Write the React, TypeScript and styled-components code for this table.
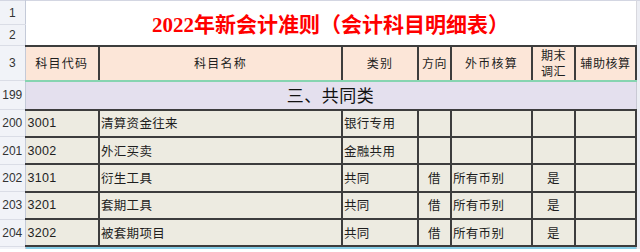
import React from "react";
import styled, {createGlobalStyle} from "styled-components";

const GlobalStyle = createGlobalStyle`
  html, body {
    margin: 0;
    padding: 0;
    background: #ffffff;
  }
  body {
    width: 640px;
    height: 252px;
    overflow: hidden;
  }
`;

const COLS = [25, 74, 243, 76, 33, 81, 43, 61, 4];

type Row = {
  no: number;
  code: string;
  name: string;
  kind: string;
  dir?: string;
  fx?: string;
  adj?: string;
};

const rows: Row[] = [
  {no: 200, code: "3001", name: "清算资金往来", kind: "银行专用"},
  {no: 201, code: "3002", name: "外汇买卖", kind: "金融共用"},
  {no: 202, code: "3101", name: "衍生工具", kind: "共同", dir: "借", fx: "所有币别", adj: "是"},
  {no: 203, code: "3201", name: "套期工具", kind: "共同", dir: "借", fx: "所有币别", adj: "是"},
  {no: 204, code: "3202", name: "被套期项目", kind: "共同", dir: "借", fx: "所有币别", adj: "是"},
];

const App = () => {
  return (
    <>
      <GlobalStyle/>
      <Sheet>
        <colgroup>
          {COLS.map((w, i) => <col key={i} style={{width: w}}/>)}
        </colgroup>
        <tbody>
          <TableRow $h={24}>
            <RowHead>1</RowHead>
            <TitleCell rowSpan={2} colSpan={7}>2022年新会计准则（会计科目明细表）</TitleCell>
            <Gutter rowSpan={2}/>
          </TableRow>
          <TableRow $h={21}>
            <RowHead>2</RowHead>
          </TableRow>
          <TableRow $h={35}>
            <RowHead>3</RowHead>
            <HeadCell $first>科目代码</HeadCell>
            <HeadCell>科目名称</HeadCell>
            <HeadCell>类别</HeadCell>
            <HeadCell $tight>方向</HeadCell>
            <HeadCell>外币核算</HeadCell>
            <HeadCell $tight>
              <HeadLine>期末</HeadLine>
              <HeadLine>调汇</HeadLine>
            </HeadCell>
            <HeadCell $tight>辅助核算</HeadCell>
            <Gutter/>
          </TableRow>
          <TableRow $h={27}>
            <RowHead>199</RowHead>
            <GroupCell colSpan={7}>三、共同类</GroupCell>
            <Gutter/>
          </TableRow>
          {rows.map(r => (
            <TableRow key={r.no} $h={27.4}>
              <RowHead>{r.no}</RowHead>
              <DataCell $first $num>{r.code}</DataCell>
              <DataCell>{r.name}</DataCell>
              <DataCell>{r.kind}</DataCell>
              <DataCell $align="center">{r.dir}</DataCell>
              <DataCell>{r.fx}</DataCell>
              <DataCell $align="center">{r.adj}</DataCell>
              <DataCell/>
              <Gutter/>
            </TableRow>
          ))}
          <BottomRow>
            <BottomHead/>
            <BottomLine colSpan={7}/>
            <Gutter/>
          </BottomRow>
        </tbody>
      </Sheet>
    </>
  );
};

const Sheet = styled.table`
  table-layout: fixed;
  border-collapse: collapse;
  width: 640px;
  border-top: 1px solid #d3d6e2;
  font-family: "Noto Sans CJK SC", sans-serif;
  color: #1e1e1e;
`;

const TableRow = styled.tr<{ $h: number }>`
  height: ${({$h}) => $h}px;
`;

const RowHead = styled.th`
  padding: 0;
  background: #f1f3f8;
  border-right: 1px solid #c4cad8;
  border-bottom: 1px solid #dadde6;
  font-family: "Liberation Sans", "DejaVu Sans", sans-serif;
  font-weight: normal;
  font-size: 12px;
  color: #333;
  text-align: center;
  white-space: nowrap;
  overflow: hidden;
`;

const TitleCell = styled.td`
  padding: 0;
  background: #ffffff;
  border-right: 1px solid #d8d8de;
  border-bottom: 2px solid #3d3d3d;
  text-align: center;
  vertical-align: middle;
  font-family: "Liberation Serif", "Noto Sans CJK SC", serif;
  font-weight: bold;
  font-size: 21px;
  color: #ff0000;
  white-space: nowrap;
`;

const HeadCell = styled.td<{ $first?: boolean; $tight?: boolean }>`
  padding: 0;
  background: #fce6d8;
  border-left: ${({$first}) => ($first ? "none" : "2px solid #3d3d3d")};
  border-right: 2px solid #3d3d3d;
  border-bottom: 2px solid #86d4b0;
  text-align: center;
  vertical-align: middle;
  font-size: 12px;
  line-height: 16px;
  letter-spacing: ${({$tight}) => ($tight ? "0.6px" : "1.3px")};
  white-space: nowrap;
  overflow: hidden;
`;

const HeadLine = styled.div`
  height: 16px;
  line-height: 16px;
`;

const GroupCell = styled.td`
  padding: 0 0 2px;
  background: #e4e0ee;
  border-right: 1px solid #c9c9d4;
  border-bottom: 2px solid #3d3d3d;
  text-align: center;
  vertical-align: middle;
  font-size: 17px;
  letter-spacing: 0.5px;
  color: #111;
`;

const DataCell = styled.td<{ $first?: boolean; $num?: boolean; $align?: string }>`
  padding: 0 ${({$first}) => ($first ? "2px" : "1px")};
  background: #edebe1;
  border-left: ${({$first}) => ($first ? "none" : "2px solid #3d3d3d")};
  border-right: 2px solid #3d3d3d;
  border-bottom: 2px solid #3d3d3d;
  text-align: ${({$align}) => $align || "left"};
  vertical-align: middle;
  font-family: ${({$num}) => ($num ? '"Liberation Sans", "DejaVu Sans", sans-serif' : '"Noto Sans CJK SC", sans-serif')};
  font-size: 12.5px;
  line-height: 16px;
  letter-spacing: 0.3px;
  white-space: nowrap;
  overflow: hidden;
`;

const Gutter = styled.td`
  padding: 0;
  background: #eceef4;
  border-left: 1px solid #c6cad6;
`;

const BottomRow = styled.tr`
  height: 3px;
`;

const BottomHead = styled.td`
  padding: 0;
  background: #f1f3f8;
  border-right: 1px solid #c4cad8;
`;

const BottomLine = styled.td`
  padding: 0;
  background: #86cde6;
`;

export default App;
